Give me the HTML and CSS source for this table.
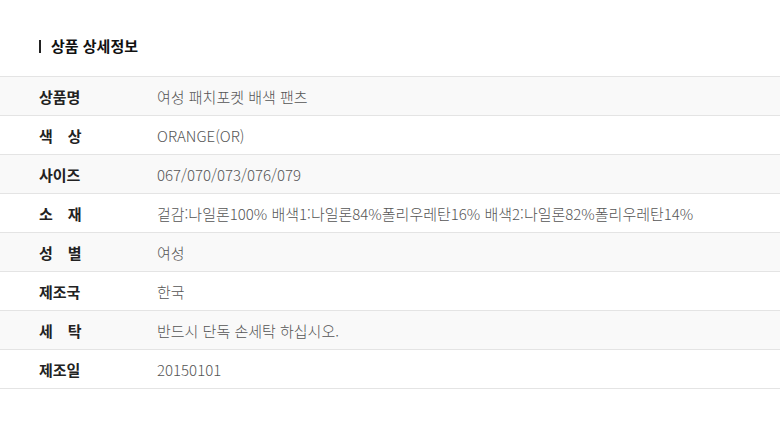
FILE: index.html
```html
<!DOCTYPE html>
<html lang="ko">
<head>
  <meta charset="UTF-8" />
  <meta name="viewport" content="width=device-width, initial-scale=1.0" />
  <title>상품 상세정보</title>
  <link rel="stylesheet" href="styles.css">
</head>
<body>
  <div class="detail">
    <h2 class="detail-title">상품 상세정보</h2>

    <table class="info-table">
      <tr>
        <th>상품명</th>
        <td>여성 패치포켓 배색 팬츠</td>
      </tr>
      <tr>
        <th>색&emsp;상</th>
        <td>ORANGE(OR)</td>
      </tr>
      <tr>
        <th>사이즈</th>
        <td>067/070/073/076/079</td>
      </tr>
      <tr>
        <th>소&emsp;재</th>
        <td>겉감:나일론100% 배색1:나일론84%폴리우레탄16% 배색2:나일론82%폴리우레탄14%</td>
      </tr>
      <tr>
        <th>성&emsp;별</th>
        <td>여성</td>
      </tr>
      <tr>
        <th>제조국</th>
        <td>한국</td>
      </tr>
      <tr>
        <th>세&emsp;탁</th>
        <td>반드시 단독 손세탁 하십시오.</td>
      </tr>
      <tr>
        <th>제조일</th>
        <td>20150101</td>
      </tr>
    </table>
  </div>
</body>
</html>
```

FILE: styles.css
```css
* {
  box-sizing: border-box;
  margin: 0;
  padding: 0;
}

body {
  background-color: #fff;
  color: #222;
  font-family: 'Noto Sans CJK KR', 'Noto Sans', sans-serif;
}

.detail {
  padding-top: 36px;
}

.detail-title {
  display: flex;
  align-items: center;
  gap: 10px;
  padding-left: 39px;
  font-size: 15px;
  font-weight: bold;
  line-height: 20px;
  color: #111;
  margin-bottom: 20px;
}

.detail-title:before {
  content: "";
  width: 2px;
  height: 13px;
  background-color: #222;
}

.info-table {
  width: 100%;
  border-collapse: collapse;
  border-top: 1px solid #e4e4e4;
}

.info-table tr {
  border-bottom: 1px solid #e4e4e4;
}

.info-table tr:nth-child(odd) {
  background-color: #f9f9f9;
}

.info-table th,
.info-table td {
  height: 39px;
  font-size: 15px;
  text-align: left;
  vertical-align: middle;
}

.info-table th {
  width: 157px;
  padding-left: 39px;
  font-weight: bold;
  color: #222;
}

.info-table td {
  color: #555;
  font-weight: 300;
}
```
